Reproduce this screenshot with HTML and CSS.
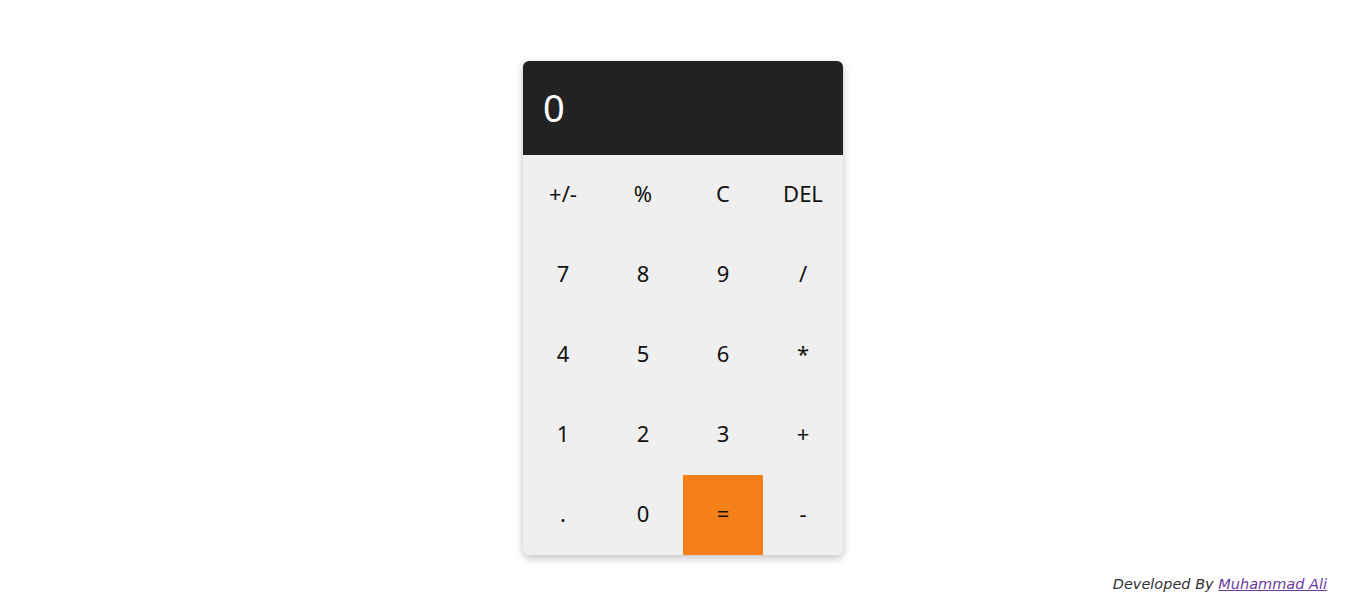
FILE: index.html
```html
<!DOCTYPE html>
<html>
<head>
<meta charset="utf-8">
<link rel="stylesheet" href="styles.css">
</head>
<body>
<main class="page">
  <div class="calc">
    <div class="display">0</div>
    <div class="keys">
      <div class="key">+/-</div>
      <div class="key">%</div>
      <div class="key">C</div>
      <div class="key">DEL</div>
      <div class="key">7</div>
      <div class="key">8</div>
      <div class="key">9</div>
      <div class="key">/</div>
      <div class="key">4</div>
      <div class="key">5</div>
      <div class="key">6</div>
      <div class="key">*</div>
      <div class="key">1</div>
      <div class="key">2</div>
      <div class="key">3</div>
      <div class="key">+</div>
      <div class="key">.</div>
      <div class="key">0</div>
      <div class="key equals">=</div>
      <div class="key">-</div>
    </div>
  </div>
</main>
<footer class="footer">Developed By <a href="#">Muhammad Ali</a></footer>
</body>
</html>
```

FILE: styles.css
```css
html, body {
  margin: 0;
  padding: 0;
  background: #ffffff;
}
body {
  font-family: "Noto Sans", "Open Sans", sans-serif;
}
.page {
  display: flex;
  justify-content: center;
  padding-top: 61px;
  padding-left: 2px;
}
.calc {
  width: 320px;
  border-radius: 6px;
  overflow: hidden;
  box-shadow: 0 3px 8px rgba(0,0,0,0.25);
  background: #efefef;
}
.display {
  height: 94px;
  background: #222222;
  color: #ffffff;
  font-size: 38px;
  line-height: 92px;
  padding-left: 20px;
  box-sizing: border-box;
}
.keys {
  display: grid;
  grid-template-columns: repeat(4, 80px);
  grid-auto-rows: 80px;
}
.key {
  display: flex;
  align-items: center;
  justify-content: center;
  font-size: 22px;
  color: #111111;
  padding-bottom: 4px;
  box-sizing: border-box;
}
.equals {
  background: #f58017;
}
.footer {
  text-align: right;
  padding-right: 37px;
  margin-top: 21px;
  font-family: "DejaVu Sans", sans-serif;
  font-style: italic;
  font-size: 14.5px;
  color: #333333;
}
.footer a {
  color: #6c3aa2;
}
```
